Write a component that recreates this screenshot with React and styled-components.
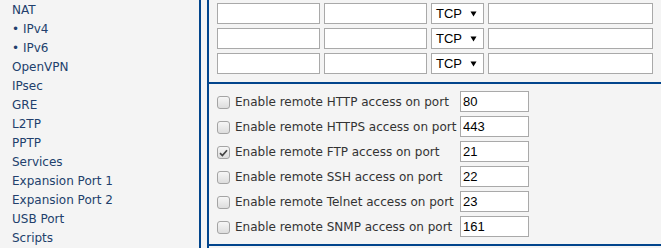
import React from 'react';
import styled, { createGlobalStyle } from 'styled-components';

const Global = createGlobalStyle`
  html, body {
    margin: 0;
    padding: 0;
    background: #f4f4f4;
  }
  body {
    font-family: 'DejaVu Sans', Verdana, sans-serif;
    font-size: 12px;
  }
`;

const blue = '#02458c';

const Page = styled.div`
  display: flex;
  height: 248px;
  overflow: hidden;
  background: #f4f4f4;
`;

const Sidebar = styled.ul`
  list-style: none;
  margin: 0;
  padding: 0 0 0 12px;
  width: 187px;
  flex: none;
  border-right: 2px solid ${blue};
  margin-right: 6px;
`;

const NavItem = styled.li`
  line-height: 19px;
  height: 19px;
  color: #223f6c;
  white-space: nowrap;
  margin-top: ${(p) => (p.first ? '0.5px' : '0')};
`;

const Main = styled.div`
  flex: 1;
  border-left: 2px solid ${blue};
  display: flex;
  flex-direction: column;
`;

const Section = styled.div`
  border-bottom: 2px solid ${blue};
  padding: ${(p) => p.pad};
  display: flex;
  flex-direction: column;
  gap: 4px;
`;

const Row = styled.div`
  display: flex;
  align-items: center;
  gap: 4px;
  height: 21px;
`;

const TextBox = styled.input`
  box-sizing: border-box;
  width: ${(p) => p.w}px;
  height: 21px;
  margin: 0;
  border: 1px solid #a9a9a9;
  background: #fff;
  padding: 0 2px;
  font-family: 'Liberation Sans', Arial, sans-serif;
  font-size: 13px;
  color: #000;
  outline: none;
`;

const Select = styled.div`
  box-sizing: border-box;
  width: 53px;
  height: 21px;
  border: 1px solid #a9a9a9;
  background: #fff;
  display: flex;
  align-items: center;
  padding-left: 4px;
  font-family: 'Liberation Sans', Arial, sans-serif;
  font-size: 13px;
  color: #000;

  svg {
    margin-left: 8px;
  }
`;

const PortGrid = styled.div`
  display: grid;
  grid-template-columns: 243px 69px;
  align-items: center;
  height: 21px;
`;

const Label = styled.label`
  display: flex;
  align-items: center;
  color: #333;
  white-space: nowrap;
  overflow: hidden;
`;

const Box = styled.span`
  box-sizing: border-box;
  width: 13px;
  height: 13px;
  margin: 2px 5px 0 0;
  border: 1px solid #a4a4a4;
  border-radius: 3px;
  background: linear-gradient(#f6f6f6, #dddddd);
  display: flex;
  align-items: center;
  justify-content: center;
  flex: none;
`;

const Check = () => (
  <svg width="9" height="8" viewBox="0 0 9 8">
    <path d="M1 4.2 L3.4 6.6 L8 1.2" fill="none" stroke="#444" strokeWidth="1.7" />
  </svg>
);

const Arrow = () => (
  <svg width="7" height="6" viewBox="0 0 7 6">
    <path d="M0.5 0.5 H6.5 L3.5 5.5 Z" fill="#000" />
  </svg>
);

const nav = [
  'NAT', '• IPv4', '• IPv6', 'OpenVPN', 'IPsec', 'GRE', 'L2TP', 'PPTP',
  'Services', 'Expansion Port 1', 'Expansion Port 2', 'USB Port', 'Scripts',
];

const services = [
  { name: 'HTTP', port: '80', on: false },
  { name: 'HTTPS', port: '443', on: false },
  { name: 'FTP', port: '21', on: true },
  { name: 'SSH', port: '22', on: false },
  { name: 'Telnet', port: '23', on: false },
  { name: 'SNMP', port: '161', on: false },
];

export default function App() {
  return (
    <Page>
      <Global />
      <Sidebar>
        {nav.map((n, i) => (
          <NavItem key={n} first={i === 0}>{n}</NavItem>
        ))}
      </Sidebar>
      <Main>
        <Section pad="3px 0 8px 8px">
          {[0, 1, 2].map((r) => (
            <Row key={r}>
              <TextBox w={103} defaultValue="" />
              <TextBox w={103} defaultValue="" />
              <Select>
                TCP
                <Arrow />
              </Select>
              <TextBox w={165} defaultValue="" />
            </Row>
          ))}
        </Section>
        <Section pad="7px 0 7px 8px">
          {services.map((s) => (
            <PortGrid key={s.name}>
              <Label>
                <Box>{s.on && <Check />}</Box>
                Enable remote {s.name} access on port
              </Label>
              <TextBox w={69} defaultValue={s.port} />
            </PortGrid>
          ))}
        </Section>
      </Main>
    </Page>
  );
}
